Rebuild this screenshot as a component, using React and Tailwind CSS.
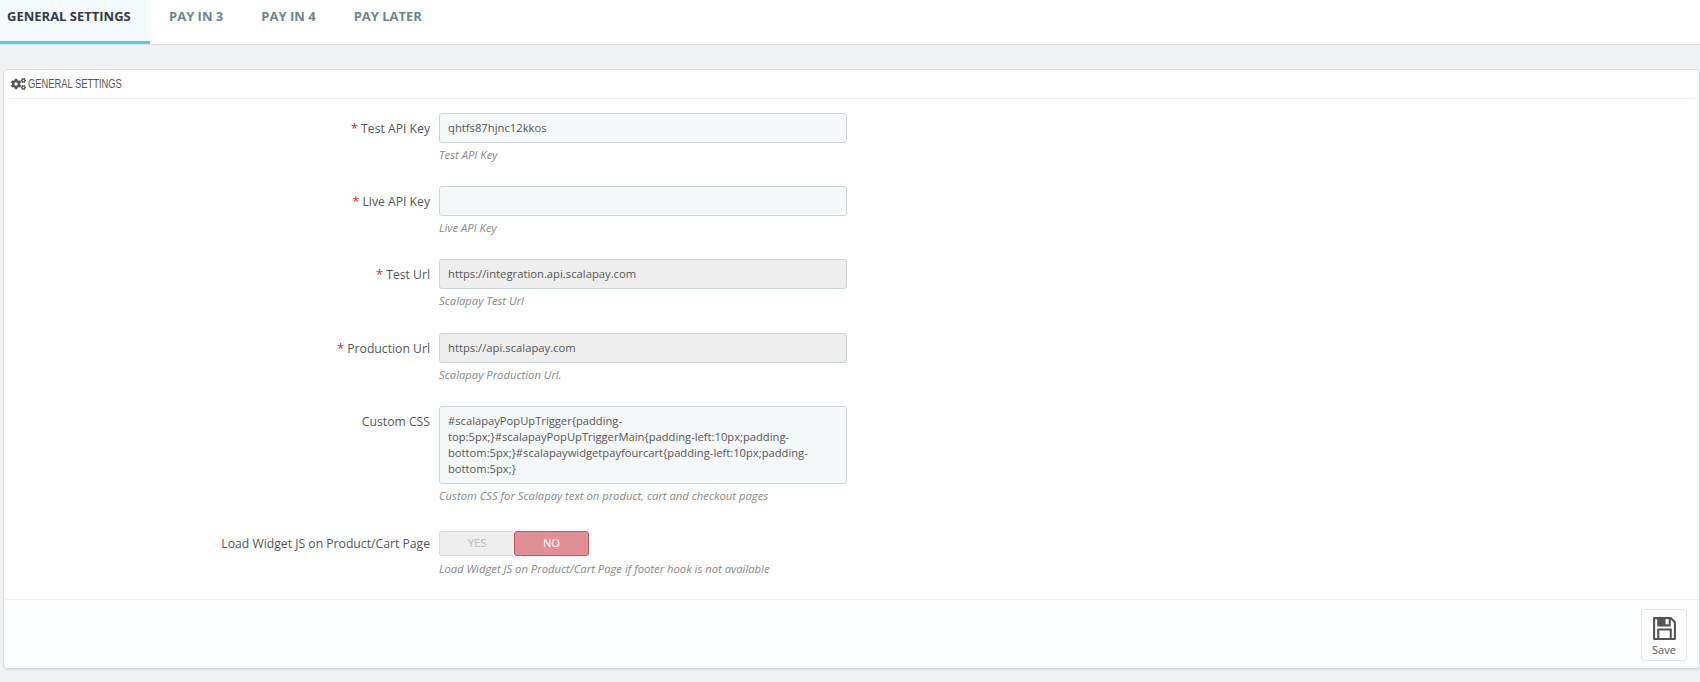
import React from "react";
import { FaCogs } from "react-icons/fa";

const sans = "font-['Open_Sans',sans-serif]";

function Row({ label, required, help, helpGap = "mt-[4px]", labelPad = "pt-[7px]", className = "", children }) {
  return (
    <div className={"flex " + className}>
      <div className={"w-[435px] pr-[9px] text-right text-[12.2px] leading-[17px] text-[#555] " + labelPad}>
        {required && <span className="text-[#e0262c] text-[13px] leading-[14px] mr-[3px]">*</span>}
        {label}
      </div>
      <div className="w-[408px]">
        {children}
        <p className={"text-[11.25px] leading-[15px] italic text-[#888] " + helpGap}>{help}</p>
      </div>
    </div>
  );
}

function Field({ value, disabled }) {
  return (
    <div
      className={
        "h-[30px] rounded-[3px] border border-[#c7d6db] px-[8px] text-[11.25px] leading-[28px] text-[#555] " +
        (disabled ? "bg-[#eeeeee]" : "bg-[#f5f8f9]")
      }
    >
      {value}
    </div>
  );
}

export default function App() {
  return (
    <div className={sans + " h-[682px] w-[1700px] overflow-hidden bg-[#eff1f2]"}>
      <nav className="flex h-[45px] items-stretch border-b border-[#d9dee0] bg-white text-[13px] leading-[18px] font-bold">
        <div className="flex h-[44px] w-[150px] items-start border-b-[3px] border-[#4dd0e6] bg-[#f4f9fb] pl-[7px] pt-[7px] text-[#363a41]">
          GENERAL SETTINGS
        </div>
        <div className="pl-[19px] pt-[7px] text-[#6c868e]">PAY IN 3</div>
        <div className="pl-[38px] pt-[7px] text-[#6c868e]">PAY IN 4</div>
        <div className="pl-[38px] pt-[7px] text-[#6c868e]">PAY LATER</div>
      </nav>

      <div className="pl-[3px] pt-[24px]">
        <section className="flex h-[600px] flex-col rounded-[4px] border border-[#d3d8db] bg-white shadow-[0_2px_0_#e3e6e8]">
          <div className="mx-[5px] flex h-[29px] items-center gap-[2px] border-b border-[#eeeeee] pl-[2px] text-[#555]">
            <FaCogs className="h-[14px] w-[15px]" />
            <span className="origin-left scale-x-[0.78] font-['Liberation_Sans',sans-serif] text-[12px] leading-[14px]">
              GENERAL SETTINGS
            </span>
          </div>

          <div className="pt-[14px]">
            <Row label="Test API Key" required help="Test API Key">
              <Field value="qhtfs87hjnc12kkos" />
            </Row>
            <Row label="Live API Key" required help="Live API Key" className="mt-[24px]">
              <Field value="" />
            </Row>
            <Row label="Test Url" required help="Scalapay Test Url" className="mt-[24px]">
              <Field value="https://integration.api.scalapay.com" disabled />
            </Row>
            <Row label="Production Url" required help="Scalapay Production Url." className="mt-[25px]">
              <Field value="https://api.scalapay.com" disabled />
            </Row>
            <Row label="Custom CSS" help="Custom CSS for Scalapay text on product, cart and checkout pages" className="mt-[24px]">
              <div className="h-[78px] rounded-[3px] border border-[#c7d6db] bg-[#f5f8f9] px-[8px] pt-[6px] text-[11.2px] leading-[16px] text-[#555]">
                #scalapayPopUpTrigger{"{"}padding-<br />
                top:5px;{"}"}#scalapayPopUpTriggerMain{"{"}padding-left:10px;padding-<br />
                bottom:5px;{"}"}#scalapaywidgetpayfourcart{"{"}padding-left:10px;padding-<br />
                bottom:5px;{"}"}
              </div>
            </Row>
            <Row
              label="Load Widget JS on Product/Cart Page"
              help="Load Widget JS on Product/Cart Page if footer hook is not available"
              helpGap="mt-[5px]"
              labelPad="pt-[4px]"
              className="mt-[28px]"
            >
              <div className="flex h-[25px] w-[150px] text-center text-[11.25px] leading-[22px]">
                <div className="w-[75px] rounded-l-[3px] border border-r-0 border-[#dcdcdc] bg-[#eeeeee] text-[#bbbbbb]">YES</div>
                <div className="w-[75px] rounded-[3px] border border-[#c4565e] bg-[#e08f95] text-white">NO</div>
              </div>
            </Row>
          </div>

          <footer className="mt-[23px] flex flex-1 justify-end rounded-b-[4px] border-t border-[#eeeeee] bg-[#fcfdfe] pr-[12px] pt-[9px]">
            <div className="flex h-[52px] w-[46px] flex-col items-center rounded-[3px] border border-[#e3e6e8] bg-white pt-[6px] text-[#555]">
              <svg width="25" height="25" viewBox="0 0 24 24" fill="none" stroke="#555" strokeWidth="2">
                <path d="M2 2h16l4 4v16H2z" strokeLinejoin="round" />
                <path d="M6 2v7h11V2" fill="#555" />
                <path d="M6 22v-9h12v9" />
                <rect x="13" y="3" width="3" height="5" fill="#fff" stroke="none" />
              </svg>
              <span className="mt-[2px] text-[11px] leading-[14px]">Save</span>
            </div>
          </footer>
        </section>
      </div>
    </div>
  );
}
